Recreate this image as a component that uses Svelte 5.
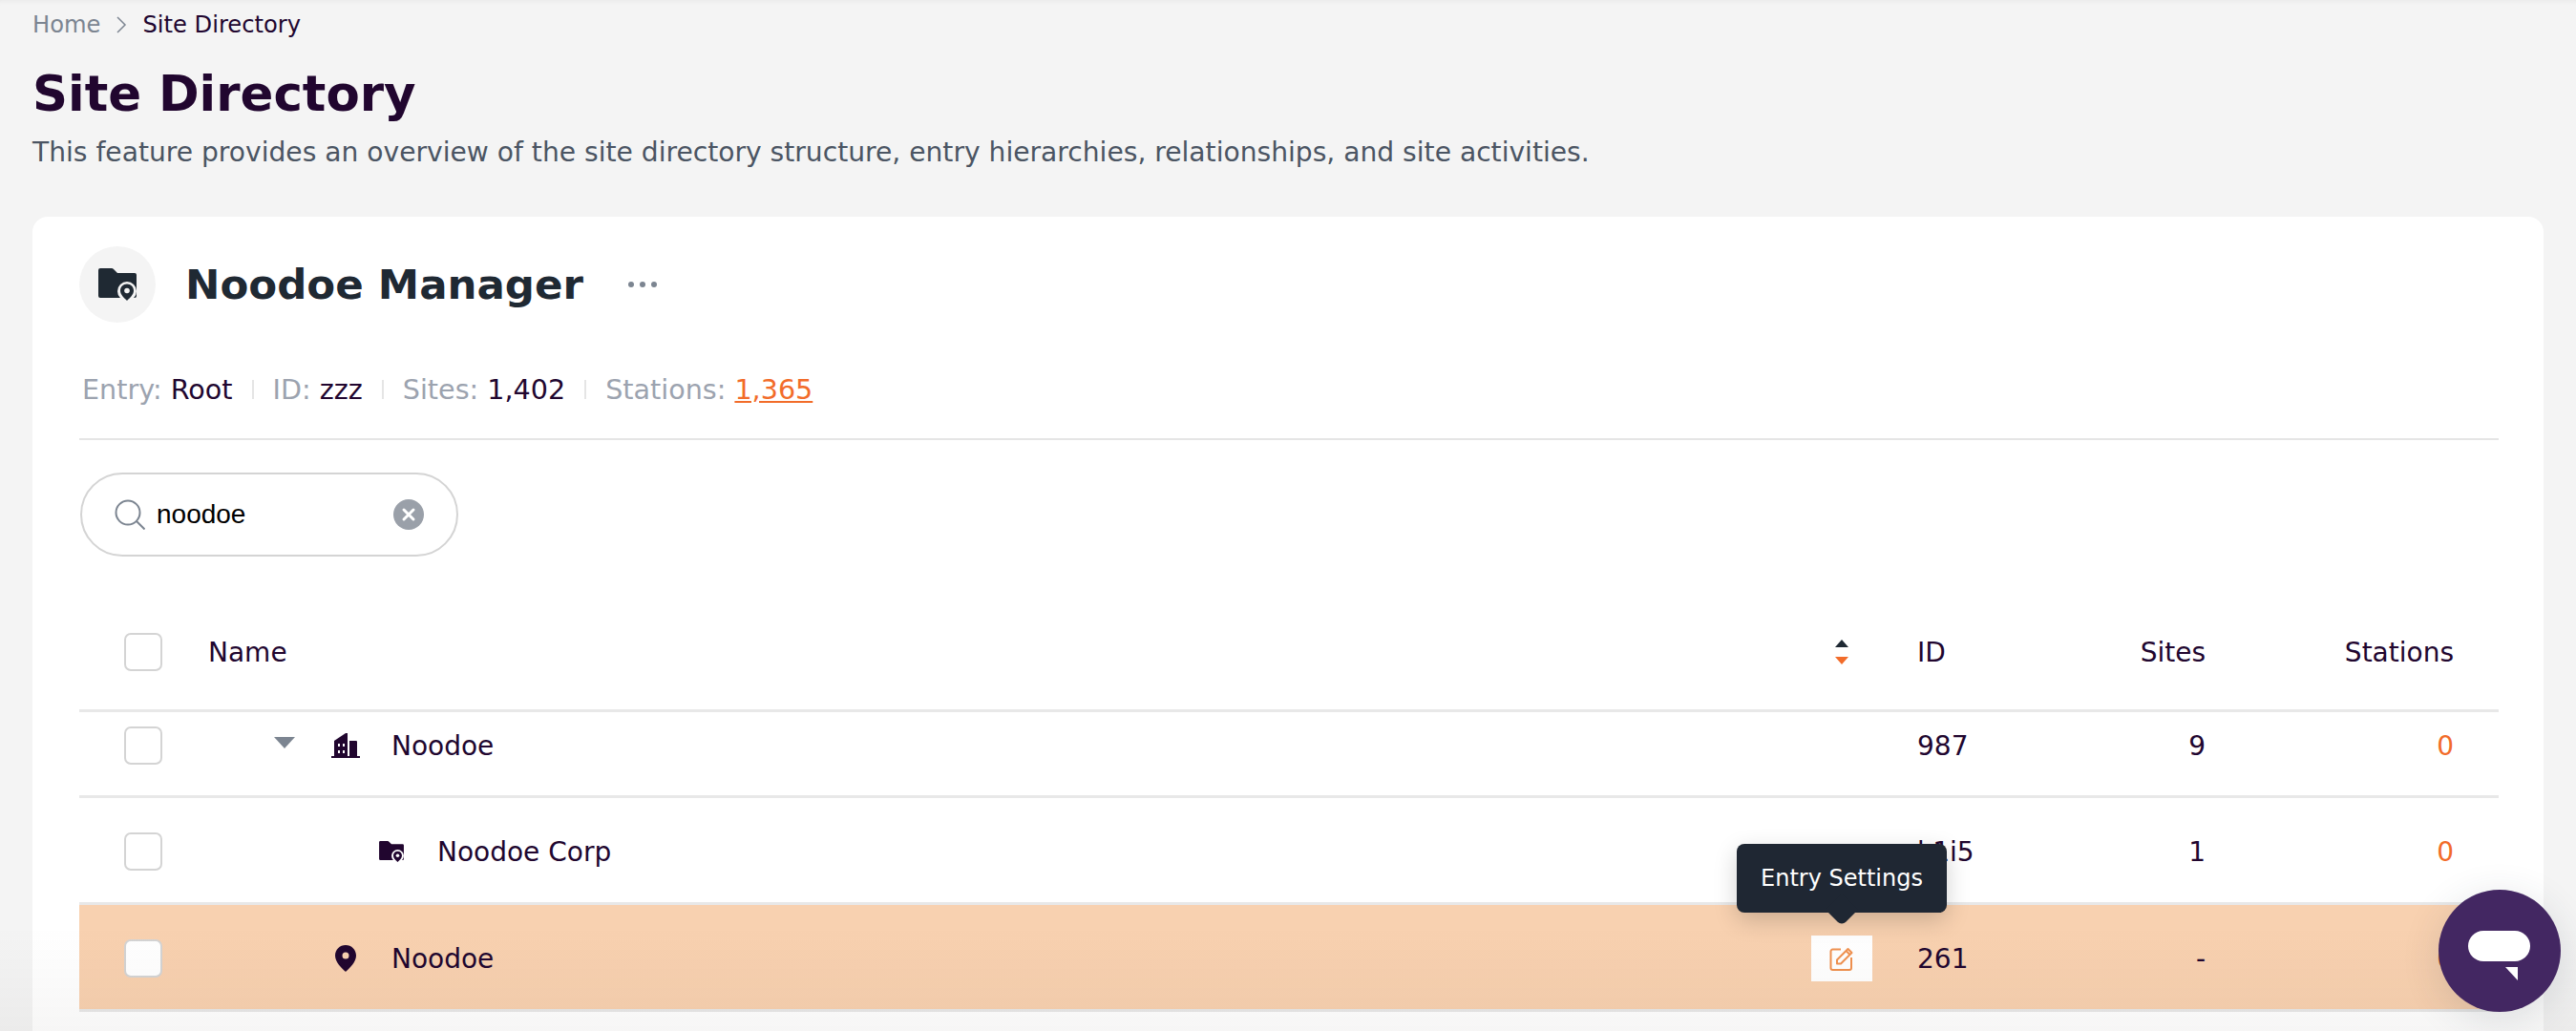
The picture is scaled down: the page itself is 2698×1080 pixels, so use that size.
<script>
	const rows = [
		{ id: '987', sites: '9', stations: '0', kind: 'site-group', name: 'Noodoe' },
		{ id: 'k1i5', sites: '1', stations: '0', kind: 'site-folder', name: 'Noodoe Corp' },
		{ id: '261', sites: '-', stations: '0', kind: 'site-pin', name: 'Noodoe' }
	];
</script>

{#snippet folder(w, h, hole)}
	<svg class="folder" width={w} height={h} viewBox="0 0 40 34">
		<path d="M2 0H14q1 0 2 1L20 5H38q2 0 2 2V29q0 2-2 2H2q-2 0-2-2V2q0-2 2-2z" fill="currentColor" />
		<circle cx="30" cy="24" r="10" fill={hole} />
		<path d="M30 16.500c-4 0-7 3-7 7 0 4 4 7.500 7 10.500 3-3 7-6.500 7-10.500 0-4-3-7-7-7z" fill="currentColor" />
		<circle cx="30" cy="23.500" r="2.800" fill={hole} />
	</svg>
{/snippet}

<div class="page">
	<nav class="crumbs">
		<span class="crumb-home">Home</span>
		<svg width="12" height="20" viewBox="0 0 12 20"><path d="M2 2l8 8-8 8" fill="none" stroke="#7c8591" stroke-width="1.500" /></svg>
		<span>Site Directory</span>
	</nav>
	<h1>Site Directory</h1>
	<p class="intro">This feature provides an overview of the site directory structure, entry hierarchies, relationships, and site activities.</p>

	<section class="card">
		<header class="card-head">
			<div class="avatar">{@render folder(40, 34, '#f4f4f4')}</div>
			<h2>Noodoe Manager</h2>
			<div class="dots"><i></i><i></i><i></i></div>
		</header>

		<div class="meta">
			<span><em>Entry:</em> Root</span>
			<b></b>
			<span><em>ID:</em> zzz</span>
			<b></b>
			<span><em>Sites:</em> 1,402</span>
			<b></b>
			<span><em>Stations:</em> <a href="#stations">1,365</a></span>
		</div>

		<div class="search">
			<svg width="32" height="32" viewBox="0 0 32 32">
				<circle cx="14" cy="14" r="12.500" fill="none" stroke="#7c8591" stroke-width="2" />
				<path d="M23 23l8.500 8.500" stroke="#7c8591" stroke-width="2" />
			</svg>
			<span class="query">noodoe</span>
			<svg class="clear" width="32" height="32" viewBox="0 0 32 32">
				<circle cx="16" cy="16" r="16" fill="#9aa0a9" />
				<path d="M11 11l10 10M21 11L11 21" stroke="#fff" stroke-width="3" stroke-linecap="round" />
			</svg>
		</div>

		<div class="row head">
			<span class="check"></span>
			<span>Name</span>
			<span class="action">
				<svg width="14" height="26" viewBox="0 0 14 26">
					<path d="M7 0l7 8H0z" fill="#1f2933" />
					<path d="M0 18h14l-7 8z" fill="#f26c2a" />
				</svg>
			</span>
			<span class="id">ID</span>
			<span class="num">Sites</span>
			<span class="num">Stations</span>
		</div>

		{#each rows as row}
			<div class="row {row.kind}">
				<span class="check"></span>
				<span class="name">
					{#if row.kind === 'site-group'}
						<svg class="caret" width="22" height="12" viewBox="0 0 22 12"><path d="M0 0h22L11 12z" fill="#7c8591" /></svg>
						<svg width="30" height="26" viewBox="0 0 30 26">
							<path fill="currentColor" fill-rule="evenodd" d="M0 24h30v2H0zM3 24V8L15 0h2v24zM19 8h7q1 0 1 1v15h-8zM7 11v3h2v-3zM12 11v3h2v-3zM7 18v3h2v-3zM12 18v3h2v-3z" />
						</svg>
					{:else if row.kind === 'site-folder'}
						{@render folder(26, 22, '#fff')}
					{:else}
						<svg width="30" height="28" viewBox="0 0 30 28">
							<path fill="currentColor" fill-rule="evenodd" d="M15 0C8.900 0 4 4.900 4 11c0 7 7 13 11 17 4-4 11-10 11-17C26 4.900 21.100 0 15 0zm0 7.500a3.500 3.500 0 1 1 0 7 3.500 3.500 0 0 1 0-7z" />
						</svg>
					{/if}
					<span>{row.name}</span>
				</span>
				<span class="action">
					{#if row.kind === 'site-pin'}
						<span class="tooltip">Entry Settings</span>
						<span class="edit">
							<svg width="26" height="26" viewBox="0 0 26 26" fill="none" stroke="#f0914f" stroke-width="2">
								<path d="M12 3.500H3.500a2 2 0 0 0-2 2V23a2 2 0 0 0 2 2H21a2 2 0 0 0 2-2V12" />
								<path d="M8 14.500L19.500 3l4 4L12 18.500H8zM17.500 5l4 4" stroke-linejoin="round" />
							</svg>
						</span>
					{/if}
				</span>
				<span class="id">{row.id}</span>
				<span class="num">{row.sites}</span>
				<span class="num orange">{row.stations}</span>
			</div>
		{/each}
	</section>
</div>

<div class="fade"></div>

<button class="chat" aria-label="Chat">
	<svg width="66" height="54" viewBox="0 0 66 54">
		<rect x="0" y="0" width="65" height="32" rx="16" fill="#fff" />
		<path d="M39 38h13v14z" fill="#fff" />
	</svg>
</button>

<style>
	:global(body) {
		background: #f4f4f4;
		overflow: hidden;
	}
	.page {
		height: 1080px;
		overflow: hidden;
		padding: 0 34px;
		box-sizing: border-box;
		font-family: 'DejaVu Sans', sans-serif;
		color: #21062f;
		box-shadow: inset 0 6px 6px -6px rgba(0, 0, 0, 0.07);
	}
	.crumbs {
		display: flex;
		align-items: center;
		gap: 16px;
		height: 52px;
		font-size: 24.200px;
	}
	.crumb-home {
		color: #7c8591;
	}
	h1 {
		margin: 16px 0 0;
		font-size: 51.400px;
		line-height: 60px;
		font-weight: 700;
	}
	.intro {
		margin: 15px 0 0;
		font-size: 28.150px;
		line-height: 34px;
		color: #4b5563;
	}
	.card {
		margin-top: 50px;
		background: #fff;
		border-radius: 16px;
		padding: 31px 47px 120px 49px;
	}
	.card-head {
		display: flex;
		align-items: center;
		height: 80px;
	}
	.avatar {
		width: 80px;
		height: 80px;
		border-radius: 50%;
		background: #f4f4f4;
		display: flex;
		align-items: center;
		justify-content: center;
		color: #1f2933;
	}
	.folder {
		display: block;
	}
	h2 {
		margin: 0 0 0 31px;
		font-size: 43.500px;
		font-weight: 700;
		color: #1f2933;
	}
	.dots {
		display: flex;
		gap: 6px;
		margin-left: 47px;
	}
	.dots i {
		width: 6px;
		height: 6px;
		border-radius: 50%;
		background: #7c8591;
	}
	.meta {
		display: flex;
		align-items: center;
		gap: 20px;
		height: 40px;
		margin-top: 50px;
		padding: 0 3px 31px;
		border-bottom: 2px solid #e5e5e5;
		font-size: 28.600px;
	}
	.meta em {
		font-style: normal;
		color: #9ca3af;
	}
	.meta b {
		width: 2px;
		height: 20px;
		background: #e5e5e5;
	}
	.meta a {
		color: #f26c2a;
		text-decoration: underline;
	}
	.search {
		display: flex;
		align-items: center;
		box-sizing: border-box;
		width: 396px;
		height: 88px;
		margin-top: 34px;
		margin-left: 1px;
		padding: 0 34px;
		border: 2px solid #d4d4d4;
		border-radius: 44px;
		font-family: 'Liberation Sans', Arial, sans-serif;
		font-size: 28px;
		color: #000;
	}
	.query {
		margin-left: 12px;
		flex: 1;
	}
	.row {
		display: grid;
		grid-template-columns: 88px 1fr 64px 149px 200px 260px;
		align-items: center;
		padding: 3px 47px 0;
		height: 112px;
		box-sizing: border-box;
		border-bottom: 3px solid #e8e8e8;
		font-size: 28px;
	}
	.row.head {
		height: 126px;
		margin-top: 37px;
	}
	.row.site-group {
		height: 90px;
		padding-top: 0;
		padding-bottom: 17px;
	}
	.row.site-pin {
		background: #f8d1b0;
	}
	.check {
		width: 40px;
		height: 40px;
		box-sizing: border-box;
		border: 2px solid #d4d4d4;
		border-radius: 7px;
		background: #fff;
	}
	.name {
		display: flex;
		align-items: center;
		gap: 33px;
	}
	.site-group .name {
		padding-left: 69px;
	}
	.caret {
		margin-right: 5px;
		margin-top: -6px;
	}
	.site-folder .name {
		padding-left: 179px;
		gap: 35px;
	}
	.site-pin .name {
		padding-left: 129px;
	}
	.action {
		position: relative;
		display: flex;
		justify-content: center;
	}
	.edit {
		width: 64px;
		height: 48px;
		background: #fff;
		display: flex;
		align-items: center;
		justify-content: center;
	}
	.tooltip {
		position: absolute;
		left: 50%;
		bottom: 72px;
		transform: translateX(-50%);
		width: 220px;
		height: 72px;
		display: flex;
		align-items: center;
		justify-content: center;
		border-radius: 8px;
		background: #1f2733;
		color: #fff;
		font-size: 24px;
		box-shadow: 0 8px 24px rgba(0, 0, 0, 0.18);
	}
	.tooltip::after {
		content: '';
		position: absolute;
		left: 50%;
		bottom: -9px;
		width: 24px;
		height: 24px;
		transform: translateX(-50%) rotate(45deg);
		border-radius: 0 0 6px 0;
		background: #1f2733;
	}
	.id {
		padding-left: 47px;
	}
	.num {
		text-align: right;
	}
	.orange {
		color: #f26c2a;
	}
	.fade {
		position: fixed;
		left: 0;
		right: 0;
		bottom: 0;
		height: 110px;
		pointer-events: none;
		background: linear-gradient(to bottom, rgba(60, 50, 40, 0), rgba(60, 50, 40, 0.045));
	}
	.chat {
		position: fixed;
		left: 2554px;
		top: 932px;
		width: 128px;
		height: 128px;
		padding: 12px 0 0;
		border: 0;
		border-radius: 50%;
		background: #432762;
		box-shadow: 0 8px 40px rgba(40, 60, 70, 0.14);
		display: flex;
		align-items: center;
		justify-content: center;
	}
</style>
